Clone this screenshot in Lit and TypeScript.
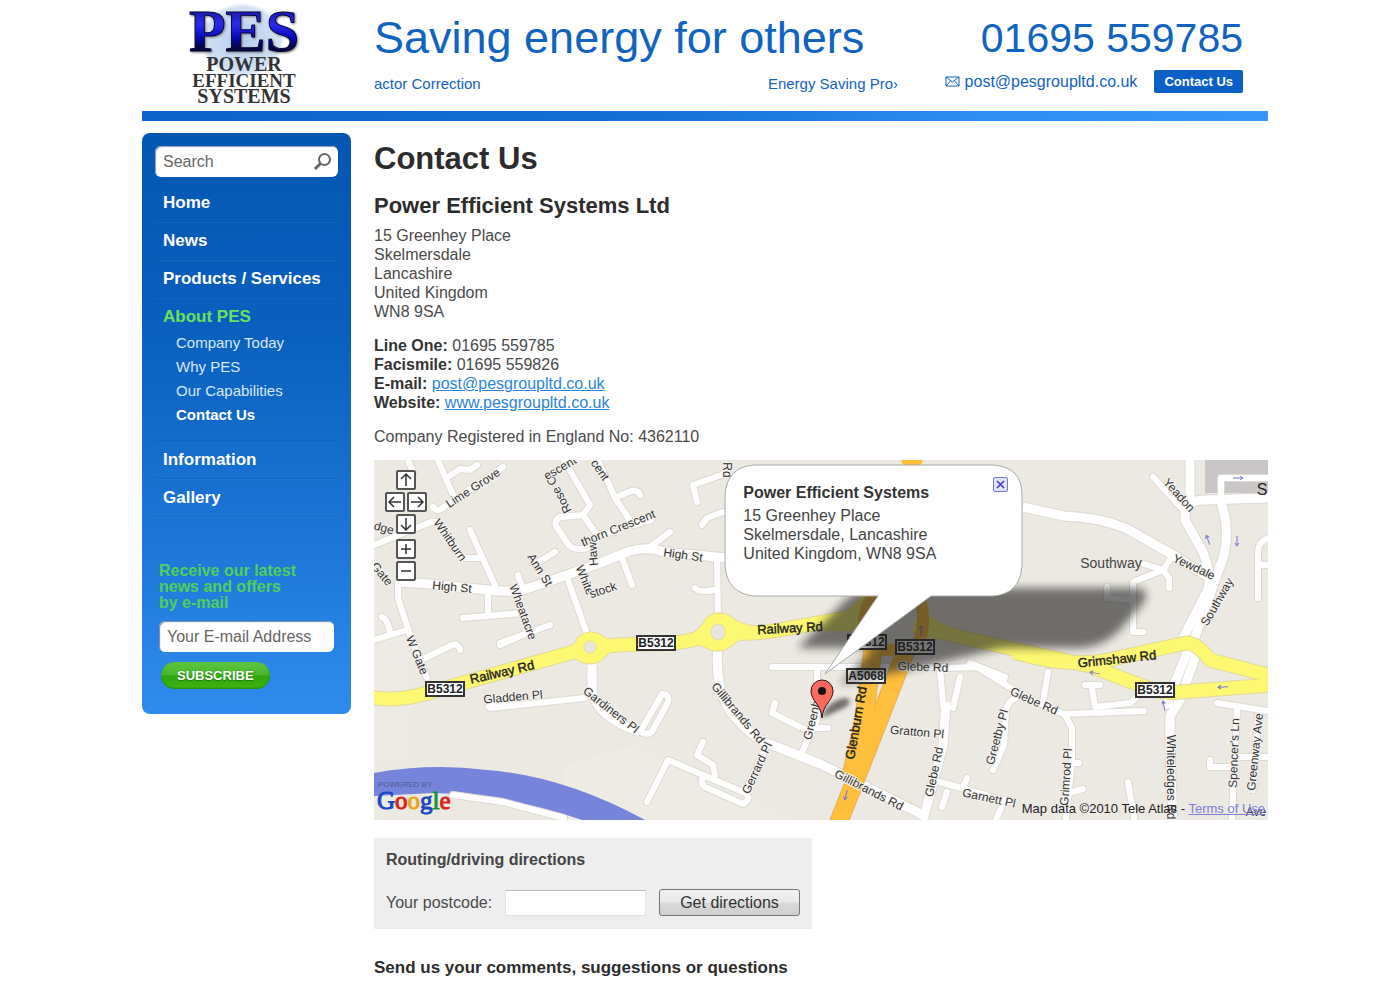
import { LitElement, html, svg, css } from "lit";
import { customElement } from "lit/decorators.js";

type Label = [text: string, x: number, y: number, angle: number];

const STREETS = [
  "M34 0L39 12", "M64 0L79 35", "M74 17L86 9L96 10L103 5", "M59 47Q63 53 70 47L129 7",
  "M0 85L52 64Q64 58 70 70Q80 96 92 98H106", "M96 70L123 130", "M144 115L149 130", "M181 92L163 103",
  "M114 132V153", "M89 158L149 153", "M176 165L126 183", "M194 120L213 174", "M24 123V138L36 175L53 218",
  "M8 157Q13 158 16 172", "M0 180L33 170", "M51 198L78 185Q84 183 86 190", "M126 185L149 175",
  "M190 0L216 45L209 55L186 57Q180 60 182 66L194 84Q198 92 219 87", "M209 55L223 75L240 72",
  "M224 0L241 38L259 65L277 60", "M241 38L257 31Q264 30 266 35", "M353 13L319 25L323 42", "M349 52L333 58L328 65",
  "M296 72L276 87", "M248 98L258 125", "M343 98L344 160", "M321 128Q325 133 341 130",
  "M79 335L129 342L190 358", "M140 239L116 245Q112 247 118 248L210 238",
  "M266 272Q276 276 279 270L294 242Q296 234 288 234L266 272",
  "M393 285L373 328", "M273 342L294 300L329 315L369 332Q380 337 369 344L331 327Q324 322 331 316",
  "M329 282L323 295L339 305L341 315", "M398 207H570", "M443 207V260L428 292", "M401 243L398 253L432 270",
  "M443 268H454", "M569 208L603 207L643 232L669 245L690 254L770 251", "M596 203L631 217L629 222",
  "M566 208L569 245", "M586 217L579 248", "M566 322L636 342", "M593 318L589 328", "M573 332L568 347",
  "M643 237Q633 242 632 250L630 285L619 310", "M674 212L669 242", "M691 255L698 268V300L692 358",
  "M694 333L709 329", "M698 303L705 303", "M754 322L760 358", "M711 225H726", "M718 228L721 247L756 243L762 238",
  "M779 17L809 50", "M847 18V42", "M847 18H894", "M799 95L789 110L759 122V172H769", "M733 127V138L756 140",
  "M770 104L789 110L795 118V128", "M894 78Q884 82 884 92V138", "M884 105H894", "M843 243L894 251",
  "M863 250L858 358", "M884 256L879 330", "M836 300V307H856", "M866 297H894", "M628 346L622 360",
];
const AVENUES = [
  "M24 122L56 124L123 131H146L176 121L226 103L256 91Q276 86 290 92L353 98L420 110",
  "M218 190V232Q224 258 266 272", "M344 185Q340 230 359 255Q376 276 393 283L446 304L469 315L553 357",
  "M572 242L569 285L549 360", "M649 47L690 56Q730 58 755 70L799 95L834 117",
  "M804 188L831 135Q840 122 829 92L811 60Q810 40 830 40L894 38", "M847 42Q856 70 850 95L820 180",
  "M816 0V42", "M817 183L794 240L794 248", "M823 192L806 240L796 256L796 290L799 360",
];
const YELLOW = [
  "M-4 237Q20 242 50 234L196 193L216 187", "M216 187Q250 184 282 184Q315 184 344 172",
  "M344 172Q380 176 416 168L490 155", "M540 166Q565 172 600 180L716 206L763 224Q790 235 806 232L898 225",
  "M640 192Q700 210 743 198L812 183Q822 182 836 200L898 216",
];
const ORANGE = ["M533 188L492 293L464 364", "M500 180L490 260L476 320"];

const LABELS: Label[] = [
  ["Lime Grove", 99, 28, -33], ["Rose Cr", 184, 33, 242], ["escent", 186, 8, -30], ["Whitburn", 76, 80, 55],
  ["High St", 78, 127, 5], ["Ann St", 166, 110, 58], ["Wheatacre", 149, 152, 70], ["White", 211, 120, 68],
  ["stock", 229, 130, -18], ["cent", 226, 10, 55], ["thorn Crescent", 244, 68, -22], ["Haw", 219, 94, -95],
  ["High St", 309, 95, 8], ["Rd", 353, 10, 90], ["Gate", 8, 114, 50], ["dge", 10, 68, 15], ["W Gate", 43, 195, 68],
  ["Gladden Pl", 139, 237, -5], ["Gardiners Pl", 237, 250, 38], ["Gillibrands Rd", 364, 253, 50],
  ["Gerrard Pl", 383, 308, -65], ["Greenh", 438, 260, -76], ["Glebe Rd", 549, 207, 2], ["Gratton Pl", 543, 272, 5],
  ["Glebe Rd", 560, 312, -78], ["Greetby Pl", 623, 277, -75], ["Garnett Pl", 615, 338, 12],
  ["Gillibrands Rd", 495, 330, 27], ["Glebe Rd", 660, 241, 24], ["Grimrod Pl", 692, 317, -86],
  ["Yeadon", 805, 35, 48], ["Yewdale", 820, 107, 25], ["Southway", 843, 142, -60],
  ["Whiteledges Rd", 797, 317, 90], ["Spencer's Ln", 860, 293, -88], ["Greenway Ave", 881, 292, -84],
  ["Ave", 882, 352, 0],
];
const MAIN_LABELS: Label[] = [
  ["Railway Rd", 128, 212, -13], ["Railway Rd", 416, 168, -3], ["Glenburn Rd", 482, 263, -80],
  ["Grimshaw Rd", 743, 199, -6],
];
const SHIELDS: [string, number, number][] = [
  ["B5312", 71, 229], ["B5312", 282, 183], ["B5312", 781, 230], ["B5312", 541, 187], ["B5312", 493, 182], ["A5068", 492, 216],
];
const ARROWS: [number, number, number][] = [
  [721, 213, 190], [849, 227, 176], [864, 18, 0], [863, 81, 90], [834, 80, 250], [790, 246, 260], [472, 335, 105], [547, 171, 270],
];

@customElement("street-map")
class StreetMap extends LitElement {
  static styles = css`
    :host { display: block; position: relative; overflow: hidden; background: #ece9e2; font-family: "Liberation Sans", Arial, sans-serif; }
    .canvas { display: block; width: 100%; height: auto; }
    .casing { fill: none; stroke: #dedad2; stroke-width: 8; stroke-linecap: round; stroke-linejoin: round; }
    .street { fill: none; stroke: #fff; stroke-width: 6; stroke-linecap: round; stroke-linejoin: round; }
    .wide-casing { fill: none; stroke: #dedad2; stroke-width: 11; stroke-linejoin: round; }
    .wide { fill: none; stroke: #fff; stroke-width: 9; stroke-linejoin: round; }
    .yellow-casing { fill: none; stroke: #e0d99a; stroke-width: 15; stroke-linejoin: round; }
    .yellow { fill: none; stroke: #fdf872; stroke-width: 13; stroke-linejoin: round; }
    .orange-casing { fill: none; stroke: #e5b060; stroke-width: 19; }
    .orange { fill: none; stroke: #fdbf3c; stroke-width: 17; }
    .label { font-size: 12px; fill: #333; stroke: #f4f2ee; stroke-width: 2; paint-order: stroke; text-anchor: middle; dominant-baseline: central; }
    .main-label { font-size: 13px; fill: #222; stroke: #222; stroke-width: .4; text-anchor: middle; dominant-baseline: central; }
    .place { font-size: 14px; fill: #444; text-anchor: middle; dominant-baseline: central; }
    .town { font-size: 16px; fill: #222; text-anchor: middle; dominant-baseline: central; }
    .shield { fill: #fff; stroke: #333; stroke-width: 2; }
    .shield-text { font-size: 12px; font-weight: 700; fill: #222; text-anchor: middle; dominant-baseline: central; }
    .arrow { fill: none; stroke: #7478cf; stroke-width: 1; }
    .powered { font-size: 8px; fill: #54598c; }
    .google { font-family: "Liberation Serif", serif; font-size: 25px; stroke-width: 1; }
    .controls { position: absolute; left: 11px; top: 10px; display: grid; grid-template-columns: repeat(4, 10px); column-gap: 1px; row-gap: 2px; }
    .control { display: block; width: 20px; height: 20px; padding: 0; border: 2px solid #555; border-radius: 2px; background: #fff; }
    .control svg { display: block; width: 16px; height: 16px; fill: none; stroke: #333; stroke-width: 1.5; }
    .middle { grid-column: 2 / span 2; }
    .left { grid-column: 1 / span 2; }
    .right { grid-column: 3 / span 2; }
    .zoom-in { margin-top: 3px; }
    .bubble { position: absolute; left: 39.3%; top: 5px; box-sizing: border-box; width: 297px; height: 131px; padding: 18px 14px 0 18px; display: flex; justify-content: space-between; align-items: flex-start; color: #444; font-size: 16px; line-height: 19px; }
    .title { margin: 0 0 4px; font-size: 16px; line-height: 19px; color: #333; }
    .address { margin: 0; }
    .close { width: 15px; height: 15px; margin-top: -6px; padding: 0; border: 1px solid #7a78dd; border-radius: 2px; background: #e2e2fb; }
    .close svg { display: block; width: 13px; height: 13px; stroke: #3c3ccc; stroke-width: 1.5; }
    .credit { position: absolute; right: 3px; bottom: 3px; font-size: 13px; line-height: 16px; color: #222; }
    .terms { color: #7b7bd8; }
  `;

  private control(position: string, name: string, path: string) {
    return html`<button class="control ${position}" aria-label=${name}><svg viewBox="0 0 16 16"><path d=${path} /></svg></button>`;
  }

  render() {
    const lines = (paths: string[], name: string) => paths.map((d) => svg`<path class=${name} d=${d} />`);
    const text = (labels: Label[], name: string) =>
      labels.map(([t, x, y, a]) => svg`<text class=${name} transform=${`translate(${x} ${y}) rotate(${a})`}>${t}</text>`);
    return html`
      <svg class="canvas" viewBox="0 0 894 360" role="img" aria-label="Map of Skelmersdale">
        <defs>
          <filter id="soft" x="-20%" y="-20%" width="140%" height="140%"><feGaussianBlur stdDeviation="4" /></filter>
          <filter id="pin-soft" x="-30%" y="-30%" width="160%" height="160%"><feGaussianBlur stdDeviation="2" /></filter>
        </defs>
        <path d="M0 175H36V300H0ZM190 305L260 285L420 360H190Z" fill="#eeebe5" />
        <path d="M831 0H894V33H831Z" fill="#c9c6c8" />
        <path d="M0 313Q56 303 113 310Q190 316 271 360H208Q130 334 60 333L0 336Z" fill="#7684dc" />
        ${lines(STREETS, "casing")}${lines(AVENUES, "wide-casing")}${lines(STREETS, "street")}${lines(AVENUES, "wide")}
        ${lines(YELLOW, "yellow-casing")}
        <path d="M184 192Q202 186 203 178Q216 166 231 177Q234 182 252 182Q238 190 231 197Q222 208 206 202Q200 196 184 192Z" fill="#fdf872" stroke="#e0d99a" />
        <path d="M304 181Q326 172 332 158Q344 148 358 157Q364 164 390 168Q368 178 360 184Q350 194 336 190Q326 184 304 181Z" fill="#fdf872" stroke="#e0d99a" />
        <path d="M450 164Q478 152 490 130L504 176Q476 168 450 172ZM548 146Q556 162 592 172L560 180L542 172Z" fill="#fdf872" />
        ${lines(YELLOW, "yellow")}
        <ellipse cx="216" cy="187" rx="6" ry="6" fill="#e9e6df" stroke="#e0d99a" />
        <ellipse cx="344" cy="172" rx="7" ry="8" fill="#e9e6df" stroke="#e0d99a" />
        ${lines(ORANGE, "orange-casing")}${lines(ORANGE, "orange")}
        <path d="M490 190H540M492 184Q482 150 510 122M542 190Q558 155 538 122" fill="none" stroke="#fdbf3c" stroke-width="12" />
        <path d="M527 0H549L546 8H530Z" fill="#fdbf3c" />
        ${ARROWS.map(([x, y, a]) => svg`<path class="arrow" transform=${`translate(${x} ${y}) rotate(${a})`} d="M-5 0H5M2 -2L5 0L2 2" />`)}
        ${text(LABELS, "label")}${text(MAIN_LABELS, "main-label")}
        <text class="place" x="737" y="103">Southway</text>
        <text class="town" x="888" y="29">S</text>
        ${SHIELDS.map(([t, x, y]) => svg`<rect class="shield" x=${x - 19} y=${y - 7} width="38" height="14" /><text class="shield-text" x=${x} y=${y}>${t}</text>`)}
        <path d="M424 188L462 150Q480 128 500 128H762Q780 130 767 146L744 172Q726 188 702 188H628L560 204L466 224L500 188Z" fill="#1c1c1a" opacity=".6" filter="url(#soft)" />
        <path d="M448 258Q452 242 470 238Q482 240 470 248Z" fill="#222" opacity=".6" filter="url(#pin-soft)" />
        <path d="M380 5H619Q648 7 648 35V106Q646 134 619 136H557L451 214L504 136H380Q353 133 351 106V35Q353 7 380 5Z" fill="#fff" stroke="#aaa" />
        <path d="M448 258C447 244 437 241 437 231A11 11 0 0 1 459 231C459 241 449 244 448 258Z" fill="#fb6a5f" stroke="#301512" />
        <circle cx="448" cy="231" r="4" fill="#161010" />
        <text class="powered" x="4" y="327">POWERED BY</text>
        <text class="google" x="3" y="349"><tspan fill="#1c48c5" stroke="#1c48c5">G</tspan><tspan fill="#d9251d" stroke="#d9251d">o</tspan><tspan fill="#e5a912" stroke="#e5a912">o</tspan><tspan fill="#1c48c5" stroke="#1c48c5">g</tspan><tspan fill="#14953a" stroke="#14953a">l</tspan><tspan fill="#d9251d" stroke="#d9251d">e</tspan></text>
      </svg>
      <div class="controls">
        ${this.control("middle", "Pan up", "M8 14V2M3 7L8 2L13 7")}
        ${this.control("left", "Pan left", "M14 8H2M7 3L2 8L7 13")}
        ${this.control("right", "Pan right", "M2 8H14M9 3L14 8L9 13")}
        ${this.control("middle", "Pan down", "M8 2V14M3 9L8 14L13 9")}
        ${this.control("middle zoom-in", "Zoom in", "M3 8H13M8 3V13")}
        ${this.control("middle", "Zoom out", "M3 8H13")}
      </div>
      <div class="bubble">
        <div>
          <h3 class="title">Power Efficient Systems</h3>
          <p class="address">15 Greenhey Place<br />Skelmersdale, Lancashire<br />United Kingdom, WN8 9SA</p>
        </div>
        <button class="close" aria-label="Close"><svg viewBox="0 0 13 13"><path d="M3 3L10 10M10 3L3 10" /></svg></button>
      </div>
      <div class="credit">Map data ©2010 Tele Atlas - <a class="terms" href="#terms">Terms of Use</a></div>
    `;
  }
}

@customElement("app-root")
class AppRoot extends LitElement {
  static styles = css`
    :host { display: block; height: 100vh; overflow: hidden; background: #fff; color: #4a4a4a; font-family: "Liberation Sans", Arial, sans-serif; font-size: 16px; line-height: 19px; }
    .page { max-width: 1126px; margin: 0 auto; padding-left: 10px; }
    .header { display: grid; grid-template-columns: 232px 1fr auto; height: 111px; color: #1263c0; }
    .logo { display: block; width: 120px; height: 108px; margin-left: 42px; overflow: visible; }
    .pes { font: 700 60px "Liberation Serif", serif; text-anchor: middle; stroke: #060638; stroke-width: 1; filter: drop-shadow(1px 1px 1px #777); }
    .name { font: 700 19px "Liberation Serif", serif; text-anchor: middle; fill: #333; }
    .name-wide { font: 700 20px "Liberation Serif", serif; text-anchor: middle; fill: #333; }
    .tagline { margin: 0; padding-top: 12px; font-size: 45px; line-height: 52px; font-weight: 400; }
    .ticker { display: flex; justify-content: space-between; width: 524px; padding-top: 10px; font-size: 15px; white-space: nowrap; }
    .reach { display: flex; flex-direction: column; align-items: flex-end; padding-right: 25px; }
    .phone { padding-top: 12px; font-size: 41px; line-height: 52px; }
    .mail-row { display: flex; align-items: center; gap: 17px; padding-top: 6px; }
    .mail { display: flex; align-items: center; gap: 5px; color: inherit; text-decoration: none; }
    .envelope { width: 15px; height: 11px; fill: none; stroke: #1263c0; }
    .contact { display: block; padding: 0 10px; border-radius: 2px; background: #0c5fc4; color: #fff; font-size: 13px; line-height: 23px; font-weight: 700; text-decoration: none; }
    .bar { height: 10px; background: linear-gradient(90deg, #0c62c6, #1470d6 45%, #2f8ff3 75%, #3794f8); }
    .columns { display: grid; grid-template-columns: 209px 1fr; gap: 23px; align-items: start; padding-top: 12px; }
    .sidebar { box-sizing: border-box; padding: 13px 13px 25px; border-radius: 8px; background: linear-gradient(#0357b2, #0a60bf 35%, #1d76d6 70%, #2f8cee); }
    .search { display: flex; align-items: center; height: 31px; padding: 0 6px 0 8px; border-radius: 6px; background: #fff; box-shadow: inset 1px 1px 1px #8a9db8; }
    .search-field { flex: 1; min-width: 0; padding: 0; border: 0; background: none; font: inherit; color: #555; outline: none; }
    .search-field::placeholder, .email::placeholder { color: #666; opacity: 1; }
    .search-button { padding: 0; border: 0; background: none; }
    .glass { display: block; width: 19px; height: 19px; fill: none; stroke: #666; }
    .nav { padding-top: 7px; }
    .item { display: block; box-sizing: border-box; height: 38px; padding-left: 8px; border-bottom: 1px solid #0b55a833; box-shadow: 0 1px 0 #ffffff0d; color: #fff; font-size: 17px; line-height: 38px; font-weight: 700; text-decoration: none; }
    .group { padding: 10px 0 13px 8px; border-bottom: 1px solid #0b55a855; }
    .current { display: block; padding-bottom: 5px; color: #6ce05c; font-size: 17px; line-height: 18px; font-weight: 700; text-decoration: none; }
    .sub { display: block; padding-left: 13px; color: #d8e7fa; font-size: 15px; line-height: 24px; text-decoration: none; }
    .active { color: #fff; font-weight: 700; }
    .newsletter { display: flex; flex-direction: column; align-items: flex-start; gap: 10px; padding: 46px 4px 0 4px; }
    .offer { color: #4fd05a; font-size: 16px; line-height: 16px; font-weight: 700; }
    .email { box-sizing: border-box; width: 100%; height: 31px; padding: 0 8px; border: 0; border-radius: 6px; background: #fff; box-shadow: inset 1px 1px 1px #6c86a8; font: inherit; color: #666; }
    .subscribe { height: 27px; margin-left: 2px; padding: 0 16px; border: 0; border-radius: 14px; background: linear-gradient(#5cc63e, #48b52c 48%, #2ea50c 52%, #43b515); box-shadow: inset 0 -1px 2px #1d8a08; color: #fff; font: 700 13px "Liberation Sans", Arial, sans-serif; text-shadow: 0 1px 1px #1c7a0a; }
    .main { min-width: 0; padding-top: 8px; }
    .heading { margin: 0; color: #2c2c2c; font-size: 31px; line-height: 36px; }
    .company { margin: 16px 0 7px; color: #2c2c2c; font-size: 22px; line-height: 26px; }
    .text { margin: 0 0 15px; }
    .strong { color: #333; }
    .link { color: #2b86d9; }
    .map { margin-top: -1px; }
    .routing { box-sizing: border-box; width: 438px; margin-top: 18px; padding: 12px 12px 13px; background: #eee; }
    .routing-title { margin: 0 0 19px; font-size: 16px; line-height: 20px; color: #444; }
    .route-row { display: flex; align-items: center; gap: 13px; }
    .postcode { flex: 1; min-width: 0; box-sizing: border-box; height: 26px; border: 1px solid #e4e4e4; border-top-color: #bbb; background: #fff; font: inherit; }
    .go { box-sizing: border-box; width: 141px; height: 27px; padding: 0; border: 1px solid #777; border-radius: 3px; background: linear-gradient(#f2f2f2, #e9e9e9 48%, #dadada 52%, #cfcfcf); font: inherit; color: #333; }
    .send { margin: 29px 0 40px; color: #2c2c2c; font-size: 17px; line-height: 20px; }
  `;

  render() {
    return html`
      <div class="page">
        <header class="header">
          <svg class="logo" viewBox="0 0 120 108" role="img" aria-label="PES Power Efficient Systems">
            <defs>
              <linearGradient id="ink" x1="0" y1="0" x2="0" y2="1"><stop offset="0.2" stop-color="#1a1ab0" /><stop offset=".4" stop-color="#2b2bf0" /><stop offset=".6" stop-color="#0808b8" /><stop offset=".75" stop-color="#050540" /></linearGradient>
              <radialGradient id="globe"><stop offset="0" stop-color="#b6cdec" /><stop offset=".9" stop-color="#d3e2f4" /><stop offset="1" stop-color="#fff" /></radialGradient>
            </defs>
            <ellipse cx="58" cy="40" rx="42" ry="37" fill="url(#globe)" />
            <text class="pes" x="60" y="51" fill="url(#ink)">PES</text>
            <text class="name-wide" x="60" y="71">POWER</text>
            <text class="name" x="60" y="87">EFFICIENT</text>
            <text class="name-wide" x="60" y="103">SYSTEMS</text>
          </svg>
          <div>
            <p class="tagline">Saving energy for others</p>
            <div class="ticker"><span>actor Correction</span><span>Energy Saving Pro›</span></div>
          </div>
          <div class="reach">
            <div class="phone">01695 559785</div>
            <div class="mail-row">
              <a class="mail" href="mailto:post@pesgroupltd.co.uk">
                <svg class="envelope" viewBox="0 0 15 11"><path d="M1 1H14V10H1ZM1 1L7.500 6L14 1M1 10L5.500 5M14 10L9.500 5" /></svg>
                <span>post@pesgroupltd.co.uk</span>
              </a>
              <a class="contact" href="#contact">Contact Us</a>
            </div>
          </div>
        </header>
        <div class="bar"></div>
        <div class="columns">
          <aside class="sidebar">
            <form class="search">
              <input class="search-field" type="text" aria-label="Search" placeholder="Search" />
              <button class="search-button" type="button" aria-label="Search">
                <svg class="glass" viewBox="0 0 19 19"><circle cx="11.500" cy="7.500" r="5.500" stroke-width="2" /><path d="M7.500 11.500L2 17" stroke-width="3" /></svg>
              </button>
            </form>
            <nav class="nav">
              <a class="item" href="#home">Home</a>
              <a class="item" href="#news">News</a>
              <a class="item" href="#products">Products / Services</a>
              <div class="group">
                <a class="current" href="#about">About PES</a>
                <a class="sub" href="#today">Company Today</a>
                <a class="sub" href="#why">Why PES</a>
                <a class="sub" href="#capabilities">Our Capabilities</a>
                <a class="sub active" href="#contact">Contact Us</a>
              </div>
              <a class="item" href="#information">Information</a>
              <a class="item" href="#gallery">Gallery</a>
            </nav>
            <form class="newsletter">
              <label class="offer" for="email">Receive our latest<br />news and offers<br />by e-mail</label>
              <input class="email" id="email" type="email" placeholder="Your E-mail Address" />
              <button class="subscribe" type="button">SUBSCRIBE</button>
            </form>
          </aside>
          <main class="main">
            <h1 class="heading">Contact Us</h1>
            <h2 class="company">Power Efficient Systems Ltd</h2>
            <p class="text">15 Greenhey Place<br />Skelmersdale<br />Lancashire<br />United Kingdom<br />WN8 9SA</p>
            <p class="text">
              <b class="strong">Line One:</b> 01695 559785<br />
              <b class="strong">Facismile:</b> 01695 559826<br />
              <b class="strong">E-mail:</b> <a class="link" href="mailto:post@pesgroupltd.co.uk">post@pesgroupltd.co.uk</a><br />
              <b class="strong">Website:</b> <a class="link" href="#website">www.pesgroupltd.co.uk</a>
            </p>
            <p class="text">Company Registered in England No: 4362110</p>
            <street-map class="map"></street-map>
            <form class="routing">
              <h3 class="routing-title">Routing/driving directions</h3>
              <div class="route-row">
                <label for="postcode">Your postcode:</label>
                <input class="postcode" id="postcode" type="text" />
                <button class="go" type="button">Get directions</button>
              </div>
            </form>
            <h3 class="send">Send us your comments, suggestions or questions</h3>
          </main>
        </div>
      </div>
    `;
  }
}
